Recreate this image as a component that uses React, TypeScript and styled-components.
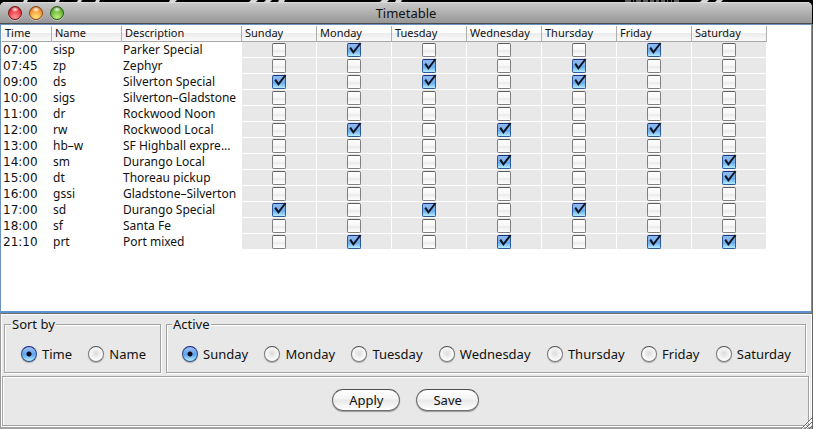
import React, { useState } from "react";
import styled, { createGlobalStyle } from "styled-components";

const Global = createGlobalStyle`
  *, *::before, *::after { box-sizing: border-box; }
  html, body, #root { height: 100%; }
  body {
    margin: 0;
    background: #000;
    color: #111;
    font-family: "Noto Sans", "Open Sans", sans-serif;
    font-size: 12px;
    overflow: hidden;
  }
`;

const Desktop = styled.div`
  display: flex;
  flex-direction: column;
  min-height: 100vh;
  padding-right: 1px;
  background: linear-gradient(#000 24px, #666 24px);
`;

const Backdrop = styled.svg`
  display: block;
  flex: none;
  width: 100%;
  height: 2px;
`;

const Window = styled.main`
  flex: 1;
  display: flex;
  flex-direction: column;
  background: #e8e8e8;
  border-radius: 5px 5px 0 0;
  overflow: hidden;
  position: relative;
`;

const TitleBar = styled.header`
  display: grid;
  grid-template-columns: 1fr auto 1fr;
  align-items: center;
  height: 22px;
  padding: 0 8px;
  background: linear-gradient(#c8c8c8, #969696);
  border-top: 1px solid #dadada;
  border-bottom: 1px solid #4c4c4c;
`;

const Lights = styled.div`
  display: flex;
  gap: 7px;
`;

const Light = styled.button<{ $rim: string; $mid: string; $glow: string }>`
  width: 14px;
  height: 14px;
  padding: 0;
  border: 1px solid ${(p) => p.$rim};
  border-radius: 50%;
  background:
    radial-gradient(ellipse 4px 3px at 50% 20%, #fffe, #fff0),
    radial-gradient(circle at 50% 85%, ${(p) => p.$glow}, ${(p) => p.$mid} 65%, ${(p) => p.$rim});
  box-shadow: 0 1px 0 #ffffff66;
`;

const Title = styled.h1`
  margin: 0;
  font-size: 13px;
  line-height: 20px;
  font-weight: 400;
`;

const ScrollPane = styled.section`
  flex: 1;
  background: #fff;
  border: 1px solid #6b93c0;
  border-bottom: 2px solid #5f93cf;
  padding: 1px 0 0 1px;
`;

const Table = styled.table`
  table-layout: fixed;
  width: 765px;
  border-collapse: separate;
  border-spacing: 0;
`;

const Col = styled.col<{ $w: number }>`
  width: ${(p) => p.$w}px;
`;

const Th = styled.th`
  height: 16px;
  padding: 0 0 1px 3px;
  font-size: 11px;
  line-height: 14px;
  font-weight: 400;
  text-align: left;
  border-right: 1px solid #b0b0b0;
  border-bottom: 1px solid #a8a8a8;
  background: linear-gradient(#fff 45%, #ececec 50%, #fafafa);
`;

const Td = styled.td`
  height: 16px;
  padding: 0 1px;
  line-height: 16px;
  white-space: nowrap;
  overflow: hidden;
  text-overflow: ellipsis;
`;

const TimeTd = styled(Td)`
  font-family: "DejaVu Sans", sans-serif;
`;

const DayTd = styled.td`
  height: 16px;
  padding: 0;
  background: #e8e8e8;
  border-right: 1px solid #fff;
  border-bottom: 1px solid #fff;
`;

const CheckWrap = styled.label`
  position: relative;
  display: block;
  width: 14px;
  height: 14px;
  margin: 0 auto;
`;

const CheckInput = styled.input`
  appearance: none;
  display: block;
  width: 14px;
  height: 14px;
  margin: 0;
  border: 1px solid #808080;
  border-top-color: #5c5c5c;
  border-radius: 2px;
  background: linear-gradient(#fff, #f6f6f6 50%, #ebebeb 55%, #fff);
  &:checked {
    border-color: #2c5a98;
    border-top-color: #14307c;
    background: linear-gradient(#8fb8ee, #7db2ee 45%, #5ea2ea 50%, #b4ecff);
  }
`;

const Tick = styled.svg`
  position: absolute;
  left: 0;
  top: -1px;
  width: 15px;
  height: 15px;
  pointer-events: none;
`;

const Controls = styled.div`
  display: flex;
  gap: 5px;
  padding: 2px 6px 3px 3px;
  border-top: 1px solid #6c6c6c;
  border-left: 1px solid #999;
  box-shadow: inset 1px 1px 0 #fff, inset -1px 0 0 #fff;
`;

const Group = styled.fieldset<{ $grow?: boolean }>`
  flex: ${(p) => (p.$grow ? "1" : "0 0 157px")};
  min-width: 0;
  margin: 0;
  height: 57px;
  padding: ${(p) => (p.$grow ? "0 14px 0 15px" : "0 14px 0 16px")};
  border: 1px solid #a2a2a2;
  box-shadow: inset 1px 1px 0 #fff, 1px 1px 0 #fff;
`;

const Legend = styled.legend`
  margin-left: -10px;
  padding: 0 1px;
  background: #e8e8e8;
  font-size: 13px;
  line-height: 16px;
`;

const Radios = styled.div`
  display: flex;
  justify-content: space-between;
  padding-top: 14px;
`;

const RadioLabel = styled.label`
  display: flex;
  align-items: center;
  gap: 5px;
  font-size: 13px;
  line-height: 16px;
  white-space: nowrap;
`;

const RadioInput = styled.input`
  appearance: none;
  width: 16px;
  height: 16px;
  margin: 0;
  border: 1px solid #777;
  border-top-color: #505050;
  border-radius: 50%;
  background: radial-gradient(circle at 50% 45%, #dcdcdc, #f2f2f2 45%, #fff 70%);
  box-shadow: 0 1px 1px #0004;
  &:checked {
    border-color: #2d4c82;
    border-top-color: #101c80;
    background:
      radial-gradient(circle at 50% 50%, #0a0a20 0 2px, #0a0a2000 3px),
      linear-gradient(#a0c0f0, #6aa8ee 45%, #5ea5ee 55%, #b8f0ff);
  }
`;

const Bottom = styled.footer`
  padding: 0 3px 1px 1px;
  border-left: 1px solid #999;
  border-bottom: 2px solid #a4a4a4;
  box-shadow: inset 1px 0 0 #fff, inset -1px 0 0 #fff;
`;

const Actions = styled.div`
  display: flex;
  justify-content: center;
  align-items: center;
  gap: 16px;
  height: 50px;
  padding-bottom: 2px;
  border: 1px solid #a2a2a2;
  box-shadow: inset 1px 1px 0 #fff, 1px 1px 0 #fff;
`;

const Push = styled.button`
  height: 22px;
  padding: 0 16px;
  border: 1px solid #6e6e6e;
  border-top-color: #505050;
  border-radius: 11px;
  background: linear-gradient(#fff, #f4f4f4 45%, #e8e8e8 50%, #fff);
  box-shadow: 0 1px 1px #0005;
  color: #111;
  font: 13px/16px "Noto Sans", "Open Sans", sans-serif;
`;

const Grip = styled.svg`
  position: absolute;
  right: 0;
  bottom: 0;
  width: 12px;
  height: 12px;
`;

const days = ["Sunday", "Monday", "Tuesday", "Wednesday", "Thursday", "Friday", "Saturday"];

const trains: [string, string, string, string][] = [
  ["07:00", "sisp", "Parker Special", ".x...x."],
  ["07:45", "zp", "Zephyr", "..x.x.."],
  ["09:00", "ds", "Silverton Special", "x.x.x.."],
  ["10:00", "sigs", "Silverton–Gladstone", "......."],
  ["11:00", "dr", "Rockwood Noon", "......."],
  ["12:00", "rw", "Rockwood Local", ".x.x.x."],
  ["13:00", "hb–w", "SF Highball expre...", "......."],
  ["14:00", "sm", "Durango Local", "...x..x"],
  ["15:00", "dt", "Thoreau pickup", "......x"],
  ["16:00", "gssi", "Gladstone–Silverton", "......."],
  ["17:00", "sd", "Durango Special", "x.x.x.."],
  ["18:00", "sf", "Santa Fe", "......."],
  ["21:10", "prt", "Port mixed", ".x.x.xx"],
];

function Check({ initial, label }: { initial: boolean; label: string }) {
  const [on, setOn] = useState(initial);
  return (
    <CheckWrap>
      <CheckInput type="checkbox" aria-label={label} checked={on} onChange={() => setOn(!on)} />
      {on && (
        <Tick viewBox="0 0 15 15">
          <path d="M3.2 5.6 L6.4 10.4 L13.6 1" fill="none" stroke="#0d1420" strokeWidth="2" />
        </Tick>
      )}
    </CheckWrap>
  );
}

function RadioGroup({ name, title, options, grow }: { name: string; title: string; options: string[]; grow?: boolean }) {
  const [value, setValue] = useState(options[0]);
  return (
    <Group $grow={grow}>
      <Legend>{title}</Legend>
      <Radios>
        {options.map((o) => (
          <RadioLabel key={o}>
            <RadioInput type="radio" name={name} checked={value === o} onChange={() => setValue(o)} />
            {o}
          </RadioLabel>
        ))}
      </Radios>
    </Group>
  );
}

export default function App() {
  return (
    <Desktop>
      <Global />
      <Backdrop aria-hidden="true">
        <path
          d="M24 0h4l-1 2h-4zM56 0h4l-1 2h-4zM78 0h4l-1 2h-4zM96 0h4l-1 2h-4zM170 0h7l-2 2h-6zM251 0h7l-2 2h-7zM266 0h6l-2 2h-6zM279 0h6l-1 2h-6zM382 0h7l-2 2h-7zM396 0h6l-1 2h-6zM702 0h7l-2 2h-7zM717 0h6l-2 2h-6z"
          fill="#d8d8d8"
        />
        <path
          d="M625 1h6M633 1h1M636 1h5M643 1h5M650 1h4M656 1h3M661 1h4M667 1h1M671 1h1M674 1h5"
          stroke="#b0b0b0"
          strokeWidth="1"
        />
      </Backdrop>
      <Window>
        <TitleBar>
          <Lights>
            <Light aria-label="Close" $rim="#7a1418" $mid="#e8303a" $glow="#ff9a9a" />
            <Light aria-label="Minimize" $rim="#8c4410" $mid="#f09030" $glow="#ffe880" />
            <Light aria-label="Zoom" $rim="#2c5c14" $mid="#62b030" $glow="#c0f080" />
          </Lights>
          <Title>Timetable</Title>
        </TitleBar>
        <ScrollPane>
          <Table>
            <colgroup>
              <Col $w={50} />
              <Col $w={70} />
              <Col $w={120} />
              {days.map((d) => <Col key={d} $w={75} />)}
            </colgroup>
            <thead>
              <tr>
                {["Time", "Name", "Description", ...days].map((h) => <Th key={h} scope="col">{h}</Th>)}
              </tr>
            </thead>
            <tbody>
              {trains.map(([time, name, description, runs]) => (
                <tr key={time}>
                  <TimeTd>{time}</TimeTd>
                  <Td>{name}</Td>
                  <Td>{description}</Td>
                  {days.map((d, i) => (
                    <DayTd key={d}>
                      <Check initial={runs[i] === "x"} label={`${name} ${d}`} />
                    </DayTd>
                  ))}
                </tr>
              ))}
            </tbody>
          </Table>
        </ScrollPane>
        <Controls>
          <RadioGroup name="sort" title="Sort by" options={["Time", "Name"]} />
          <RadioGroup name="active" title="Active" options={days} grow />
        </Controls>
        <Bottom>
          <Actions>
            <Push type="button">Apply</Push>
            <Push type="button">Save</Push>
          </Actions>
        </Bottom>
        <Grip viewBox="0 0 12 12" aria-hidden="true">
          <path d="M1 12 L12 1 M5 12 L12 5 M9 12 L12 9" stroke="#666" strokeWidth="1" />
          <path d="M2 12 L12 2 M6 12 L12 6" stroke="#fff" strokeWidth="1" />
        </Grip>
      </Window>
    </Desktop>
  );
}
